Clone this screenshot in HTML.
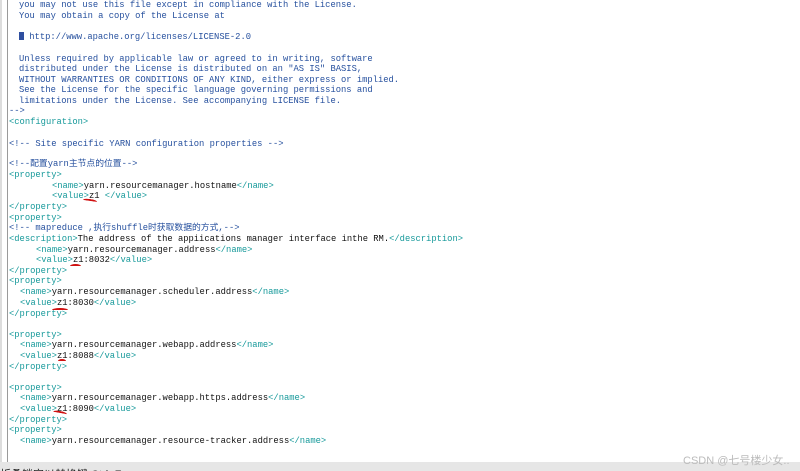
<!DOCTYPE html>
<html><head><meta charset="utf-8"><style>
html,body{margin:0;padding:0;width:800px;height:471px;overflow:hidden;background:#fff;}
body{position:relative;font-family:"Liberation Mono","Noto Sans CJK SC",monospace;font-size:8.8px;color:#111;}
.l{position:absolute;white-space:pre;line-height:11px;height:11px;}
.c{color:#26509e;}
.t{color:#16999a;}
.bar{position:absolute;left:0;top:462px;width:800px;height:9px;background:#e6e6e6;overflow:hidden;}
.bar span{position:absolute;left:0;top:4px;font-family:"Liberation Sans","Noto Sans CJK SC",sans-serif;font-size:11px;color:#222;}
.vl{position:absolute;left:7px;top:0;width:1px;height:462px;background:#9a9a9a;}
.vl2{position:absolute;left:0;top:0;width:2px;height:462px;background:#ddd;}
.red{position:absolute;height:2px;border-top:2px solid #d01010;border-radius:50%;}
.wm{position:absolute;left:683px;top:452px;font-family:"Liberation Sans","Noto Sans CJK SC",sans-serif;font-size:11px;color:#bbb;}
</style></head><body>
<div class="vl2"></div>
<div class="vl"></div>
<div class="l c" style="left:19px;top:0px">you may not use this file except in compliance with the License.</div>
<div class="l c" style="left:19px;top:11px">You may obtain a copy of the License at</div>
<div class="l c" style="left:19px;top:32px"><span style="display:inline-block;width:5px;height:8px;background:#2f4fa0;vertical-align:-1px"></span> http://www.apache.org/licenses/LICENSE-2.0</div>
<div class="l c" style="left:19px;top:54px">Unless required by applicable law or agreed to in writing, software</div>
<div class="l c" style="left:19px;top:64px">distributed under the License is distributed on an "AS IS" BASIS,</div>
<div class="l c" style="left:19px;top:75px">WITHOUT WARRANTIES OR CONDITIONS OF ANY KIND, either express or implied.</div>
<div class="l c" style="left:19px;top:85px">See the License for the specific language governing permissions and</div>
<div class="l c" style="left:19px;top:96px">limitations under the License. See accompanying LICENSE file.</div>
<div class="l c" style="left:9px;top:106px">--&gt;</div>
<div class="l t" style="left:9px;top:117px">&lt;configuration&gt;</div>
<div class="l c" style="left:9px;top:139px">&lt;!-- Site specific YARN configuration properties --&gt;</div>
<div class="l c" style="left:9px;top:159px">&lt;!--配置yarn主节点的位置--&gt;</div>
<div class="l t" style="left:9px;top:170px">&lt;property&gt;</div>
<div class="l" style="left:52px;top:181px"><span class="t">&lt;name&gt;</span>yarn.resourcemanager.hostname<span class="t">&lt;/name&gt;</span></div>
<div class="l" style="left:52px;top:191px"><span class="t">&lt;value&gt;</span>z1 <span class="t">&lt;/value&gt;</span></div>
<div class="l t" style="left:9px;top:202px">&lt;/property&gt;</div>
<div class="l t" style="left:9px;top:213px">&lt;property&gt;</div>
<div class="l c" style="left:9px;top:223px">&lt;!-- mapreduce ,执行shuffle时获取数据的方式,--&gt;</div>
<div class="l" style="left:9px;top:234px"><span class="t">&lt;description&gt;</span>The address of the appiications manager interface inthe RM.<span class="t">&lt;/description&gt;</span></div>
<div class="l" style="left:36px;top:245px"><span class="t">&lt;name&gt;</span>yarn.resourcemanager.address<span class="t">&lt;/name&gt;</span></div>
<div class="l" style="left:36px;top:255px"><span class="t">&lt;value&gt;</span>z1:8032<span class="t">&lt;/value&gt;</span></div>
<div class="l t" style="left:9px;top:266px">&lt;/property&gt;</div>
<div class="l t" style="left:9px;top:276px">&lt;property&gt;</div>
<div class="l" style="left:20px;top:287px"><span class="t">&lt;name&gt;</span>yarn.resourcemanager.scheduler.address<span class="t">&lt;/name&gt;</span></div>
<div class="l" style="left:20px;top:298px"><span class="t">&lt;value&gt;</span>z1:8030<span class="t">&lt;/value&gt;</span></div>
<div class="l t" style="left:9px;top:309px">&lt;/property&gt;</div>
<div class="l t" style="left:9px;top:330px">&lt;property&gt;</div>
<div class="l" style="left:20px;top:340px"><span class="t">&lt;name&gt;</span>yarn.resourcemanager.webapp.address<span class="t">&lt;/name&gt;</span></div>
<div class="l" style="left:20px;top:351px"><span class="t">&lt;value&gt;</span>z1:8088<span class="t">&lt;/value&gt;</span></div>
<div class="l t" style="left:9px;top:362px">&lt;/property&gt;</div>
<div class="l t" style="left:9px;top:383px">&lt;property&gt;</div>
<div class="l" style="left:20px;top:393px"><span class="t">&lt;name&gt;</span>yarn.resourcemanager.webapp.https.address<span class="t">&lt;/name&gt;</span></div>
<div class="l" style="left:20px;top:404px"><span class="t">&lt;value&gt;</span>z1:8090<span class="t">&lt;/value&gt;</span></div>
<div class="l t" style="left:9px;top:415px">&lt;/property&gt;</div>
<div class="l t" style="left:9px;top:425px">&lt;property&gt;</div>
<div class="l" style="left:20px;top:436px"><span class="t">&lt;name&gt;</span>yarn.resourcemanager.resource-tracker.address<span class="t">&lt;/name&gt;</span></div>
<div class="red" style="left:83px;top:199px;width:14px;transform:rotate(8deg)"></div>
<div class="red" style="left:70px;top:264px;width:11px"></div>
<div class="red" style="left:52px;top:308px;width:16px"></div>
<div class="red" style="left:58px;top:359px;width:8px"></div>
<div class="red" style="left:53px;top:411px;width:14px;transform:rotate(10deg)"></div>
<div class="bar"><span>折叠锁定以替换键 Ctrl+F</span></div>
<div class="wm">CSDN @七号楼少女..</div>
</body></html>
